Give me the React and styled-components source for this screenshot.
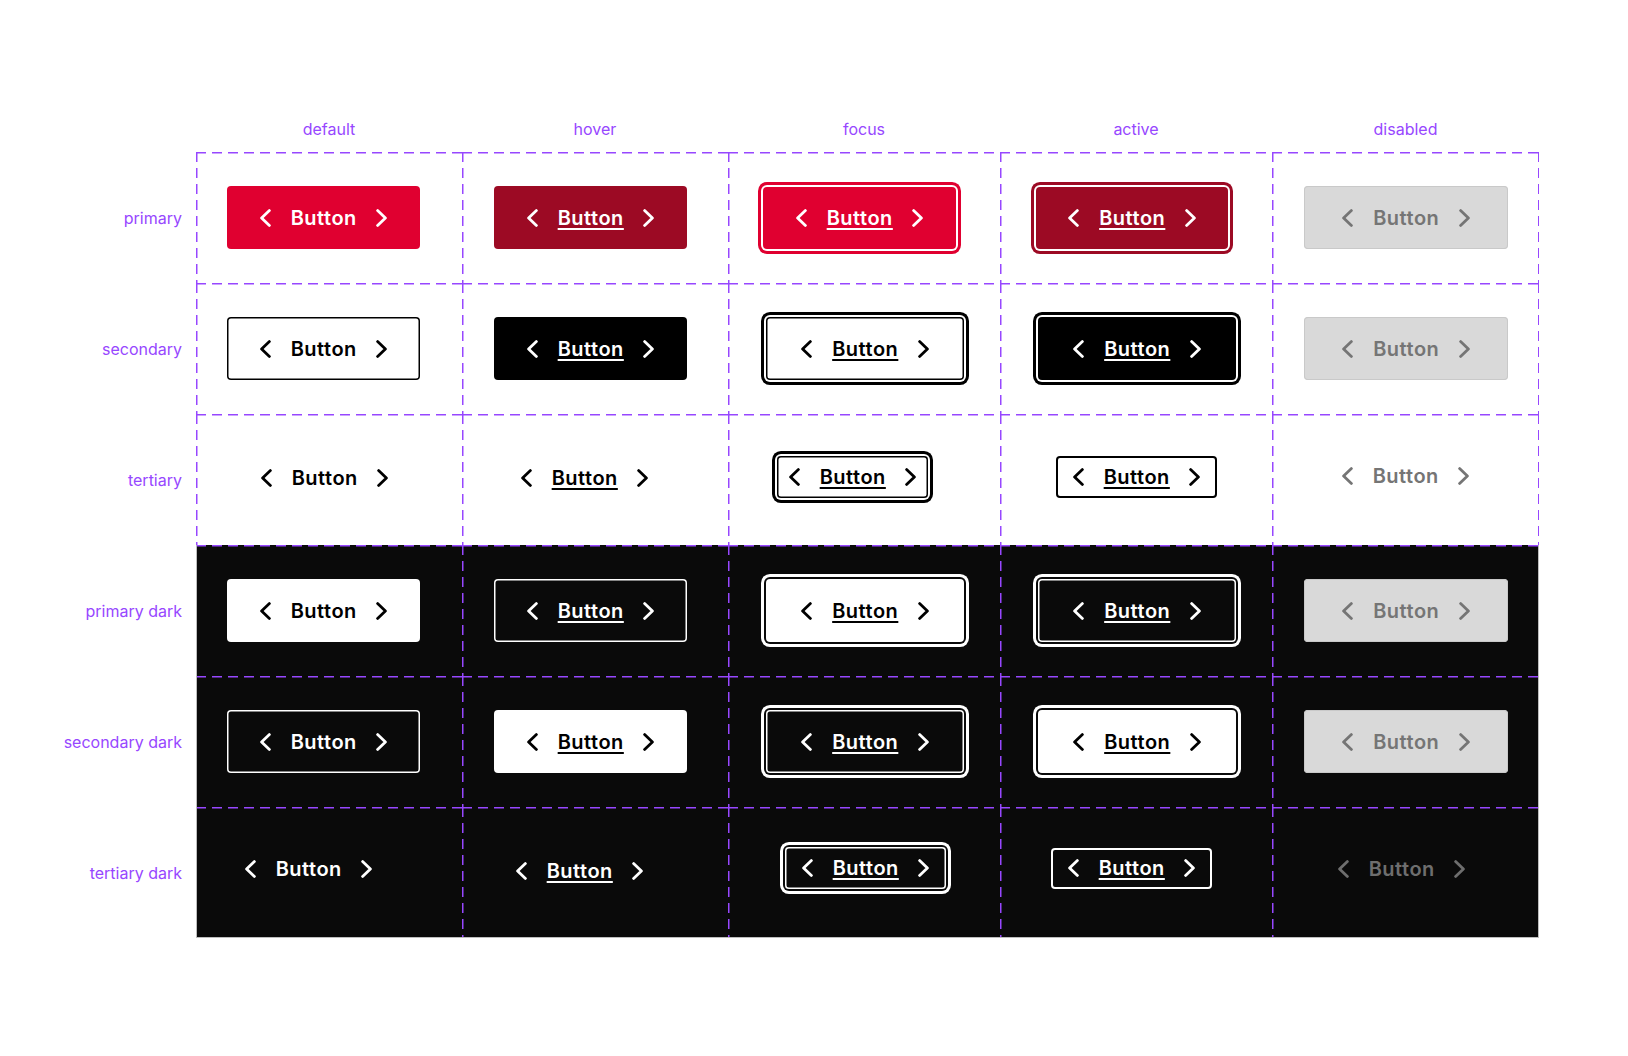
import React from 'react';
import styled, { createGlobalStyle } from 'styled-components';

const PURPLE = '#9747FF';
const DARK = '#0A0A0A';
const RED = '#E00030';
const RED_DARK = '#9C0A24';
const DIS_BG = '#D9D9D9';
const DIS_LINE = '#C9C9C9';
const DIS_FG = '#757575';
const EDGE = '#BDBDBD';

const Global = createGlobalStyle`
  html, body { margin: 0; padding: 0; background: #ffffff; }
  body { font-family: Inter, "Noto Sans", sans-serif; }
`;

const Page = styled.main`
  box-sizing: border-box;
  width: 1628px;
  min-height: 1056px;
  padding-top: 112px;
`;

const Board = styled.div`
  display: grid;
  grid-template-columns: 196px 266px 266px 272px 272px 267px;
  grid-template-rows: 40px repeat(6, 131px);
`;

const ColHead = styled.div`
  display: flex;
  justify-content: center;
  align-items: flex-start;
  padding-top: 7px;
  font-size: 16px;
  line-height: 20px;
  color: ${PURPLE};
`;

const RowHead = styled.div`
  display: flex;
  align-items: center;
  justify-content: flex-end;
  padding-right: 14px;
  font-size: 16px;
  line-height: 20px;
  color: ${PURPLE};
  white-space: nowrap;
`;

const dashH = `repeating-linear-gradient(90deg, ${PURPLE} 0 10px, transparent 10px 16px)`;
const dashV = `repeating-linear-gradient(180deg, ${PURPLE} 0 10px, transparent 10px 16px)`;

const cellLines = ({ $top, $left, $right }) => {
  const img = [];
  const size = [];
  const pos = [];
  if ($top) { img.push(dashH); size.push('100% 1.5px'); pos.push('left top'); }
  if ($left) { img.push(dashV); size.push('1.5px 100%'); pos.push('left top'); }
  if ($right) { img.push(dashV); size.push('1.5px 100%'); pos.push('right top'); }
  if (!img.length) return 'background-image: none;';
  return `background-image: ${img.join(', ')}; background-size: ${size.join(', ')}; background-position: ${pos.join(', ')}; background-repeat: no-repeat;`;
};

const cellEdges = ({ $edgeL, $edgeR, $edgeB }) => {
  const s = [];
  if ($edgeL) s.push(`inset 1px 0 0 ${EDGE}`);
  if ($edgeR) s.push(`inset -1px 0 0 ${EDGE}`);
  if ($edgeB) s.push(`inset 0 -1px 0 ${EDGE}`);
  return s.length ? s.join(', ') : 'none';
};

const Cell = styled.div`
  box-sizing: border-box;
  display: flex;
  align-items: center;
  padding-left: ${(p) => p.$pl}px;
  background-color: ${(p) => (p.$dark ? DARK : 'transparent')};
  ${cellLines}
  box-shadow: ${cellEdges};
`;

const ringShadow = ({ $line, $lineW = 1.5, $gap, $ring }) => {
  const s = [];
  if ($line) s.push(`inset 0 0 0 ${$lineW}px ${$line}`);
  if ($ring) {
    s.push(`0 0 0 2px ${$gap}`);
    s.push(`0 0 0 5px ${$ring}`);
  }
  return s.length ? s.join(', ') : 'none';
};

const Btn = styled.button`
  flex: none;
  box-sizing: border-box;
  display: inline-flex;
  align-items: center;
  justify-content: center;
  gap: 20px;
  width: ${(p) => p.$w}px;
  height: ${(p) => p.$h}px;
  margin: ${(p) => (p.$dy > 0 ? `${p.$dy * 2}px 0 0` : `0 0 ${-(p.$dy || 0) * 2}px`)};
  padding: 0;
  border: 0;
  border-radius: 4px;
  background: ${(p) => p.$bg || 'transparent'};
  color: ${(p) => p.$fg};
  box-shadow: ${ringShadow};
  font-family: Inter, "Noto Sans", sans-serif;
  font-weight: 600;
  font-size: 20px;
  line-height: 20px;
  cursor: pointer;
`;

const Label = styled.span`
  letter-spacing: 0.5px;
  margin-right: -0.5px;
  text-decoration: ${(p) => (p.$u ? 'underline' : 'none')};
  text-decoration-thickness: 1.5px;
  text-underline-offset: 3px;
`;

const ChevronSvg = styled.svg`
  flex: none;
  width: 12px;
  height: 20px;
  fill: none;
  stroke: currentColor;
  stroke-width: 2.8;
  stroke-linecap: round;
  stroke-linejoin: round;
`;

const Chevron = ({ dir }) => (
  <ChevronSvg viewBox="0 0 12 20" aria-hidden="true">
    <path d={dir === 'left' ? 'M10.4 2.6 L2.6 10 L10.4 17.4' : 'M1.6 2.6 L9.4 10 L1.6 17.4'} />
  </ChevronSvg>
);

const COLS = ['default', 'hover', 'focus', 'active', 'disabled'];

const disabledBox = { bg: DIS_BG, fg: DIS_FG, line: DIS_LINE, lineW: 1, w: 204, h: 63, pl: 32 };

const ROWS = [
  {
    label: 'primary',
    dark: false,
    cells: [
      { bg: RED, fg: '#fff', w: 193, h: 63, pl: 31 },
      { bg: RED_DARK, fg: '#fff', u: true, w: 193, h: 63, pl: 32 },
      { bg: RED, fg: '#fff', u: true, gap: '#fff', ring: RED, w: 193, h: 62, pl: 35 },
      { bg: RED_DARK, fg: '#fff', u: true, gap: '#fff', ring: RED_DARK, w: 192, h: 62, pl: 36 },
      disabledBox,
    ],
  },
  {
    label: 'secondary',
    dark: false,
    cells: [
      { bg: '#fff', fg: '#000', line: '#000', w: 193, h: 63, pl: 31 },
      { bg: '#000', fg: '#fff', u: true, w: 193, h: 63, pl: 32 },
      { bg: '#fff', fg: '#000', u: true, line: '#000', gap: '#fff', ring: '#000', w: 198, h: 63, pl: 38 },
      { bg: '#000', fg: '#fff', u: true, gap: '#fff', ring: '#000', w: 198, h: 63, pl: 38 },
      disabledBox,
    ],
  },
  {
    label: 'tertiary',
    dark: false,
    cells: [
      { fg: '#000', w: 161, h: 42, pl: 48, dy: -1.5 },
      { fg: '#000', u: true, w: 161, h: 42, pl: 42, dy: -1.5 },
      { fg: '#000', u: true, line: '#000', gap: '#fff', ring: '#000', w: 151, h: 42, pl: 49, dy: -2.5 },
      { fg: '#000', u: true, line: '#000', lineW: 2, w: 161, h: 42, pl: 56, dy: -2.5 },
      { fg: DIS_FG, w: 161, h: 42, pl: 53, dy: -3.5 },
    ],
  },
  {
    label: 'primary dark',
    dark: true,
    cells: [
      { bg: '#fff', fg: '#000', w: 193, h: 63, pl: 31 },
      { bg: DARK, fg: '#fff', u: true, line: '#fff', w: 193, h: 63, pl: 32 },
      { bg: '#fff', fg: '#000', u: true, gap: DARK, ring: '#fff', w: 198, h: 63, pl: 38 },
      { bg: DARK, fg: '#fff', u: true, line: '#fff', gap: DARK, ring: '#fff', w: 198, h: 63, pl: 38 },
      disabledBox,
    ],
  },
  {
    label: 'secondary dark',
    dark: true,
    cells: [
      { bg: DARK, fg: '#fff', line: '#fff', w: 193, h: 63, pl: 31 },
      { bg: '#fff', fg: '#000', u: true, w: 193, h: 63, pl: 32 },
      { bg: DARK, fg: '#fff', u: true, line: '#fff', gap: DARK, ring: '#fff', w: 198, h: 63, pl: 38 },
      { bg: '#fff', fg: '#000', u: true, gap: DARK, ring: '#fff', w: 198, h: 63, pl: 38 },
      disabledBox,
    ],
  },
  {
    label: 'tertiary dark',
    dark: true,
    cells: [
      { fg: '#fff', w: 161, h: 42, pl: 32, dy: -4 },
      { fg: '#fff', u: true, w: 161, h: 42, pl: 37, dy: -1.5 },
      { fg: '#fff', u: true, line: '#fff', gap: DARK, ring: '#fff', w: 161, h: 42, pl: 57, dy: -4.5 },
      { fg: '#fff', u: true, line: '#fff', lineW: 2, w: 161, h: 41, pl: 51, dy: -4.5 },
      { fg: '#6E6E6E', w: 161, h: 42, pl: 49, dy: -4 },
    ],
  },
];

export default function App() {
  const last = ROWS.length - 1;
  return (
    <Page>
      <Global />
      <Board>
        <div />
        {COLS.map((c) => (
          <ColHead key={c}>{c}</ColHead>
        ))}
        {ROWS.map((row, ri) => (
          <React.Fragment key={row.label}>
            <RowHead>{row.label}</RowHead>
            {row.cells.map((b, ci) => {
              const lastCol = ci === COLS.length - 1;
              return (
                <Cell
                  key={ci}
                  $pl={b.pl}
                  $dark={row.dark}
                  $top
                  $left={!row.dark || ci > 0}
                  $right={!row.dark && lastCol}
                  $edgeL={row.dark && ci === 0}
                  $edgeR={row.dark && lastCol}
                  $edgeB={row.dark && ri === last}
                >
                  <Btn
                    type="button"
                    $bg={b.bg}
                    $fg={b.fg}
                    $line={b.line}
                    $lineW={b.lineW}
                    $gap={b.gap}
                    $ring={b.ring}
                    $w={b.w}
                    $h={b.h}
                    $dy={b.dy}
                  >
                    <Chevron dir="left" />
                    <Label $u={b.u}>Button</Label>
                    <Chevron dir="right" />
                  </Btn>
                </Cell>
              );
            })}
          </React.Fragment>
        ))}
      </Board>
    </Page>
  );
}
